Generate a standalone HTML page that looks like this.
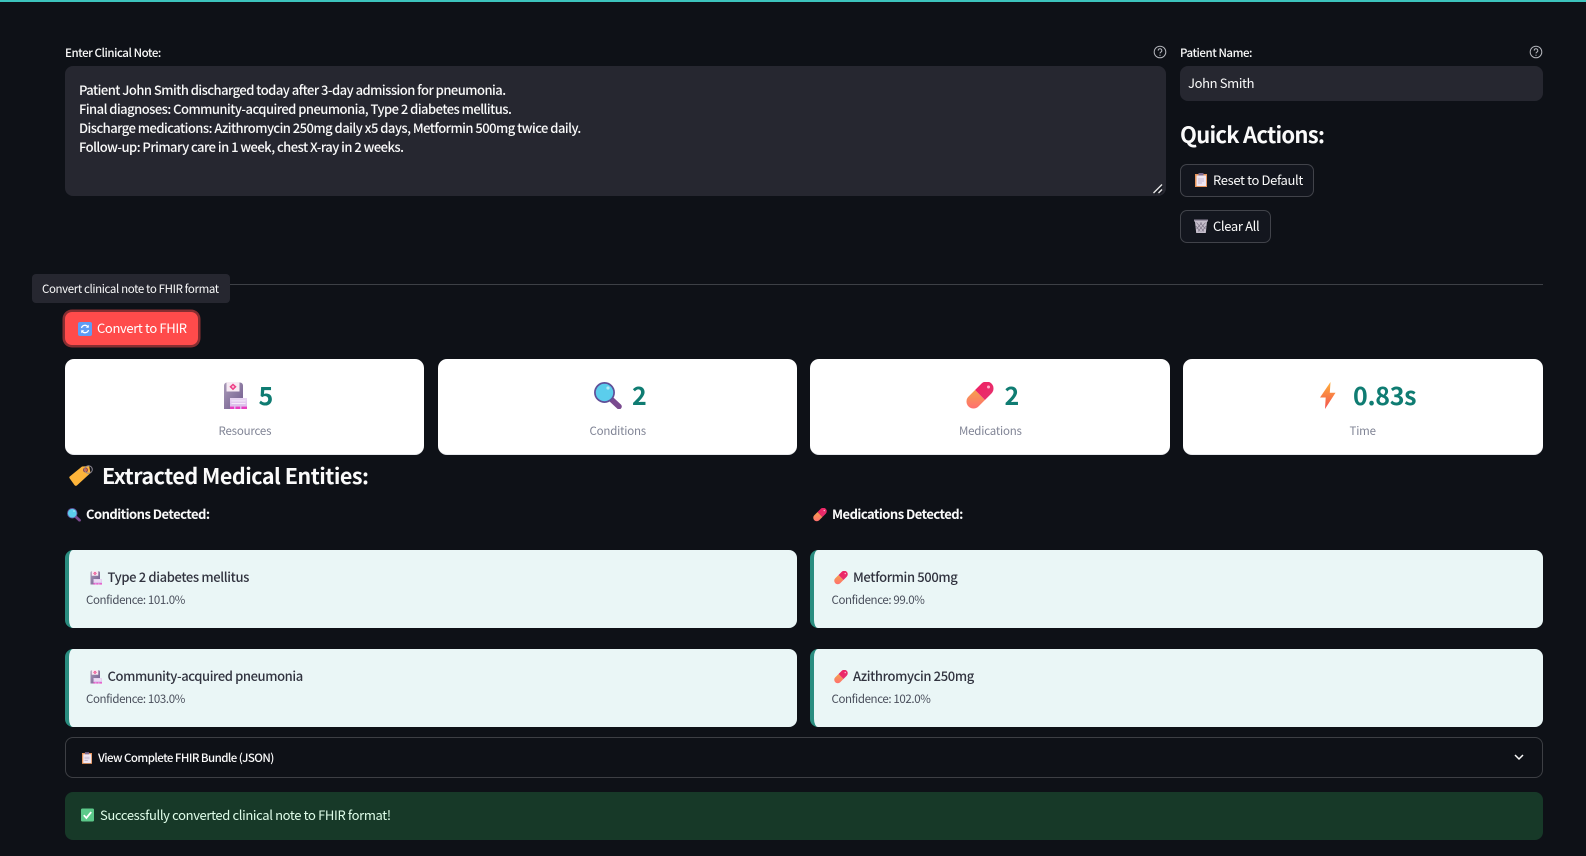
<!DOCTYPE html>
<html lang="en">
<head>
<meta charset="utf-8">
<title>Clinical Note to FHIR</title>
<style>
html,body{margin:0;padding:0;background:#0e1117;width:1586px;height:856px;overflow:hidden}
body{position:relative;font-family:"Noto Sans CJK SC","Liberation Sans",sans-serif;color:#fafafa;font-size:13px}
.a{position:absolute;box-sizing:border-box}
.t{position:absolute;white-space:pre;line-height:20px;height:20px}
.b{font-size:13px;letter-spacing:-.36px}
.i{position:absolute;overflow:visible}
.lab{font-size:11.5px;letter-spacing:-.45px;color:#fafafa;font-weight:500}
.bn{border:1px solid rgba(250,250,250,.2);border-radius:7px;background:#13161e}
.card{background:#fff;border-radius:9px;top:359px;height:96px;border-bottom:1px solid #e6e8ec}
.num{font-size:25px;letter-spacing:-.3px;font-weight:700;color:#0f7c72;line-height:30px;height:30px}
.ml{font-size:11.5px;letter-spacing:-.2px;color:#808495}
.ent{background:#eaf6f6;border-left:4px solid #2a8d80;border-radius:8px;height:78px}
.et{font-size:13px;letter-spacing:-.36px;font-weight:500;color:#31333f}
.ec{font-size:11.5px;letter-spacing:-.38px;color:#4a4f5c}
.h3{font-size:13px;letter-spacing:-.53px;font-weight:700}
</style>
</head>
<body>
<svg width="0" height="0" style="position:absolute">
<defs>
<linearGradient id="gb" x1="0" y1="0" x2="1" y2="1"><stop offset="0" stop-color="#a99ab8"/><stop offset="1" stop-color="#6f5a8c"/></linearGradient>
<linearGradient id="gp" x1="0" y1="0" x2="0" y2="1"><stop offset="0" stop-color="#e8d6f2"/><stop offset="1" stop-color="#d9b6ea"/></linearGradient>
<linearGradient id="gl" x1="0" y1="0" x2="0" y2="1"><stop offset="0" stop-color="#ffb03a"/><stop offset="1" stop-color="#f2504f"/></linearGradient>
<linearGradient id="gr" x1="0" y1="0" x2="0" y2="1"><stop offset="0" stop-color="#f4a14d"/><stop offset="1" stop-color="#ff6f6f"/></linearGradient>
<linearGradient id="gk" x1="0" y1="0" x2="1" y2="1"><stop offset="0" stop-color="#f01f62"/><stop offset="1" stop-color="#e5336f"/></linearGradient>
<symbol id="hosp" viewBox="0 0 24 27">
<path d="M1 3.500a3 3 0 0 1 3-3h13a3 3 0 0 1 3 3V27H1z" fill="url(#gb)"/>
<rect x="3.500" y="0" width="13" height="9.500" fill="#f6eaf3"/>
<path d="M10 1.500l3.600 3.300L10 8.200 6.400 4.800z" fill="#ee3f86"/><path d="M10 3.400l1.400 1.400L10 6.200 8.600 4.800z" fill="#f9c6da"/>
<rect x="7" y="16" width="17" height="11" fill="url(#gp)"/>
<rect x="8.500" y="18.400" width="14" height="1" fill="#f5ecf9"/><rect x="8.500" y="21" width="14" height="1" fill="#f5ecf9"/>
<rect x="7" y="24.600" width="4" height="2.400" fill="#e93fc0"/><rect x="12.500" y="24.600" width="4.500" height="2.400" fill="#e93fc0"/><rect x="18.500" y="24.600" width="5.500" height="2.400" fill="#e93fc0"/>
</symbol>
<symbol id="mag" viewBox="0 0 28 27">
<path d="M17.500 17.500l7.500 7" stroke="#7a4a8f" stroke-width="5.600" stroke-linecap="round" fill="none"/>
<circle cx="10.500" cy="10.500" r="9.600" fill="#5bcdec" stroke="#5f4f98" stroke-width="1.700"/>
<circle cx="14" cy="6" r="1.600" fill="#b4ecf8"/>
</symbol>
<symbol id="pill" viewBox="0 0 28 27">
<path d="M9.050 8.050L2.550 14.550A7 7 0 0 0 12.450 24.450L18.950 17.950Z" fill="url(#gr)"/>
<path d="M9.050 8.050L15.550 1.550A7 7 0 0 1 25.450 11.450L18.950 17.950Z" fill="url(#gk)"/>
<circle cx="22.500" cy="5" r="1.500" fill="#ffb0cc"/>
</symbol>
<symbol id="bolt" viewBox="0 0 16 27">
<path d="M10.500 0L0 15.500h5.700L5 27 15.500 10.800H9.800z" fill="url(#gl)"/>
</symbol>
<symbol id="tag" viewBox="0 0 24 21">
<path d="M.6 11.600L13 1.500 20.200 1 21.500 8 8 20.400Q6.500 21.500 5.400 20L.6 13.300Q0 12.300.6 11.600z" fill="#fdb43a"/>
<circle cx="16.500" cy="5" r="2" fill="#e8643d" stroke="#8a4b52" stroke-width="1"/>
<circle cx="19.500" cy="4.500" r="3.800" fill="none" stroke="#8f8a96" stroke-width="1"/>
</symbol>
<symbol id="clip" viewBox="0 0 12 14">
<rect x="0" y="1" width="12" height="13" fill="#e7955c"/>
<rect x="1.500" y="2.500" width="9.500" height="10.500" fill="#eee6f2"/>
<rect x="3.500" y="0" width="5" height="2.500" fill="#7c6a8e"/>
<path d="M3 6h6M3 8h6M3 10h4" stroke="#b8a9c6" stroke-width=".8"/>
</symbol>
<symbol id="bin" viewBox="0 0 14 14">
<path d="M0 .5h14v2h-1L11.800 14H2.200L1 2.500H0z" fill="#c6bfcc"/>
<path d="M0 .5h14v1.300H0z" fill="#8f8799"/>
<path d="M2.500 3.500l7.500 9M6 3.500l5.500 6.500M1.800 7l4.500 5.500M11.500 3.500l-7.500 9M8 3.500l-5.500 6.500M12.200 7l-4.500 5.500" stroke="#7f7789" stroke-width=".7" fill="none"/>
</symbol>
<symbol id="arr" viewBox="0 0 14 14">
<rect width="14" height="14" rx="2" fill="#5f9cf5"/>
<path d="M3.500 6a3.600 3.600 0 0 1 6.400-1.200M10.500 8a3.600 3.600 0 0 1-6.400 1.200" stroke="#fff" stroke-width="1.300" fill="none"/>
<path d="M10.800 2.700v3h-3zM3.200 11.300v-3h3z" fill="#fff"/>
</symbol>
<symbol id="chk" viewBox="0 0 14 14">
<rect width="14" height="14" rx="1.500" fill="#5cc98a"/>
<path d="M3 7.200l2.800 3L11 3.800" stroke="#fff" stroke-width="1.900" fill="none"/>
</symbol>
<symbol id="help" viewBox="0 0 14 14">
<circle cx="7" cy="7" r="5.800" fill="none" stroke="#b4b6bc" stroke-width="1"/>
<path d="M5.200 5.600a1.800 1.800 0 1 1 2.700 1.500c-.6.400-.9.700-.9 1.300" fill="none" stroke="#b4b6bc" stroke-width="1"/>
<circle cx="7" cy="10.200" r=".6" fill="#b4b6bc"/>
</symbol>
</defs>
</svg>

<div class="a" style="left:0;top:0;width:1586px;height:2px;background:#3cc4bd"></div>

<div class="t lab" style="left:65px;top:43px">Enter Clinical Note:</div>
<svg class="i" style="left:1153px;top:45px" width="14" height="14"><use href="#help"/></svg>
<div class="a" style="left:65px;top:66px;width:1101px;height:130px;background:#262730;border-radius:8px"></div>
<div class="a b" style="left:79px;top:79.500px;line-height:19px;white-space:pre;color:#fafafa;font-weight:500;letter-spacing:-.53px">Patient John Smith discharged today after 3-day admission for pneumonia.
Final diagnoses: Community-acquired pneumonia, Type 2 diabetes mellitus.
Discharge medications: Azithromycin 250mg daily x5 days, Metformin 500mg twice daily.
Follow-up: Primary care in 1 week, chest X-ray in 2 weeks.</div>
<svg class="i" style="left:1152px;top:183px" width="12" height="12"><path d="M1.500 10L10 1.500M6.500 10L10 6.500" stroke="#e8e8e8" stroke-width="1.300"/><path d="M3 11L11 3M8 11l3-3" stroke="#0e1117" stroke-width=".8"/></svg>

<div class="t lab" style="left:1180px;top:43px">Patient Name:</div>
<svg class="i" style="left:1529px;top:45px" width="14" height="14"><use href="#help"/></svg>
<div class="a" style="left:1180px;top:66px;width:363px;height:35px;background:#262730;border-radius:8px"></div>
<div class="t b" style="left:1188px;top:73px">John Smith</div>

<div class="t" style="left:1180px;top:119px;height:30px;line-height:30px;font-size:22px;letter-spacing:-.75px;font-weight:700">Quick Actions:</div>

<div class="a bn" style="left:1180px;top:164px;width:134px;height:33px"></div>
<svg class="i" style="left:1195px;top:173px" width="12" height="14"><use href="#clip"/></svg>
<div class="t b" style="left:1213px;top:170px">Reset to Default</div>
<div class="a bn" style="left:1180px;top:210px;width:91px;height:33px"></div>
<svg class="i" style="left:1194px;top:219px" width="14" height="14"><use href="#bin"/></svg>
<div class="t b" style="left:1213px;top:216px">Clear All</div>

<div class="a" style="left:65px;top:284px;width:1478px;height:1px;background:#3d4046"></div>
<div class="a" style="left:32px;top:274px;width:198px;height:29px;background:#262730;border-radius:4px"></div>
<div class="t" style="left:42px;top:279px;font-size:11.500px;letter-spacing:-.38px">Convert clinical note to FHIR format</div>

<div class="a" style="left:65px;top:312px;width:133px;height:33px;background:#ff4b4b;border-radius:7px;box-shadow:0 0 0 2.500px rgba(255,75,75,.5)"></div>
<svg class="i" style="left:78px;top:322px" width="14" height="14"><use href="#arr"/></svg>
<div class="t b" style="left:97px;top:318px;color:#fff">Convert to FHIR</div>

<div class="a card" style="left:65px;width:359px"></div>
<div class="a card" style="left:438px;width:359px"></div>
<div class="a card" style="left:810px;width:360px"></div>
<div class="a card" style="left:1183px;width:360px"></div>

<svg class="i" style="left:223px;top:382px" width="24" height="27"><use href="#hosp"/></svg>
<div class="t num" style="left:258.500px;top:380px">5</div>
<div class="t ml" style="left:218.500px;top:421px">Resources</div>

<svg class="i" style="left:594px;top:382px" width="28" height="27"><use href="#mag"/></svg>
<div class="t num" style="left:632px;top:380px">2</div>
<div class="t ml" style="left:589.500px;top:421px">Conditions</div>

<svg class="i" style="left:966px;top:382px" width="28" height="27"><use href="#pill"/></svg>
<div class="t num" style="left:1004.500px;top:380px">2</div>
<div class="t ml" style="left:959px;top:421px">Medications</div>

<svg class="i" style="left:1320px;top:382px" width="16" height="27"><use href="#bolt"/></svg>
<div class="t num" style="left:1353px;top:380px">0.83s</div>
<div class="t ml" style="left:1349.500px;top:421px">Time</div>

<svg class="i" style="left:69px;top:465px" width="24" height="21"><use href="#tag"/></svg>
<div class="t" style="left:102px;top:461px;height:30px;line-height:30px;font-size:21.500px;letter-spacing:-.5px;font-weight:700">Extracted Medical Entities:</div>

<svg class="i" style="left:67px;top:508px" width="14" height="13.500"><use href="#mag"/></svg>
<div class="t h3" style="left:86px;top:504px">Conditions Detected:</div>
<svg class="i" style="left:813px;top:508px" width="14" height="13.500"><use href="#pill"/></svg>
<div class="t h3" style="left:832px;top:504px">Medications Detected:</div>

<div class="a ent" style="left:65px;top:550px;width:732px"></div>
<svg class="i" style="left:90px;top:571px" width="12" height="13.500"><use href="#hosp"/></svg>
<div class="t et" style="left:107.500px;top:567px">Type 2 diabetes mellitus</div>
<div class="t ec" style="left:86px;top:590px">Confidence: 101.0%</div>

<div class="a ent" style="left:810px;top:550px;width:733px"></div>
<svg class="i" style="left:834px;top:571px" width="14" height="13.500"><use href="#pill"/></svg>
<div class="t et" style="left:853px;top:567px">Metformin 500mg</div>
<div class="t ec" style="left:831.500px;top:590px">Confidence: 99.0%</div>

<div class="a ent" style="left:65px;top:649px;width:732px"></div>
<svg class="i" style="left:90px;top:670px" width="12" height="13.500"><use href="#hosp"/></svg>
<div class="t et" style="left:107.500px;top:666px;letter-spacing:-.4px">Community-acquired pneumonia</div>
<div class="t ec" style="left:86px;top:689px">Confidence: 103.0%</div>

<div class="a ent" style="left:810px;top:649px;width:733px"></div>
<svg class="i" style="left:834px;top:670px" width="14" height="13.500"><use href="#pill"/></svg>
<div class="t et" style="left:853px;top:666px">Azithromycin 250mg</div>
<div class="t ec" style="left:831.500px;top:689px">Confidence: 102.0%</div>

<div class="a" style="left:65px;top:737px;width:1478px;height:41px;border:1px solid rgba(250,250,250,.2);border-radius:8px"></div>
<svg class="i" style="left:82px;top:752px" width="10" height="12"><use href="#clip"/></svg>
<div class="t" style="left:98px;top:748px;font-size:11.500px;letter-spacing:-.55px;font-weight:500">View Complete FHIR Bundle (JSON)</div>
<svg class="i" style="left:1514px;top:753px" width="10" height="8"><path d="M1 2l4 4 4-4" fill="none" stroke="#fafafa" stroke-width="1.500"/></svg>

<div class="a" style="left:65px;top:792px;width:1478px;height:48px;background:#173928;border-radius:8px"></div>
<svg class="i" style="left:81px;top:808px" width="13" height="14"><use href="#chk"/></svg>
<div class="t b" style="left:100px;top:805px;color:#dffde9">Successfully converted clinical note to FHIR format!</div>
</body>
</html>
